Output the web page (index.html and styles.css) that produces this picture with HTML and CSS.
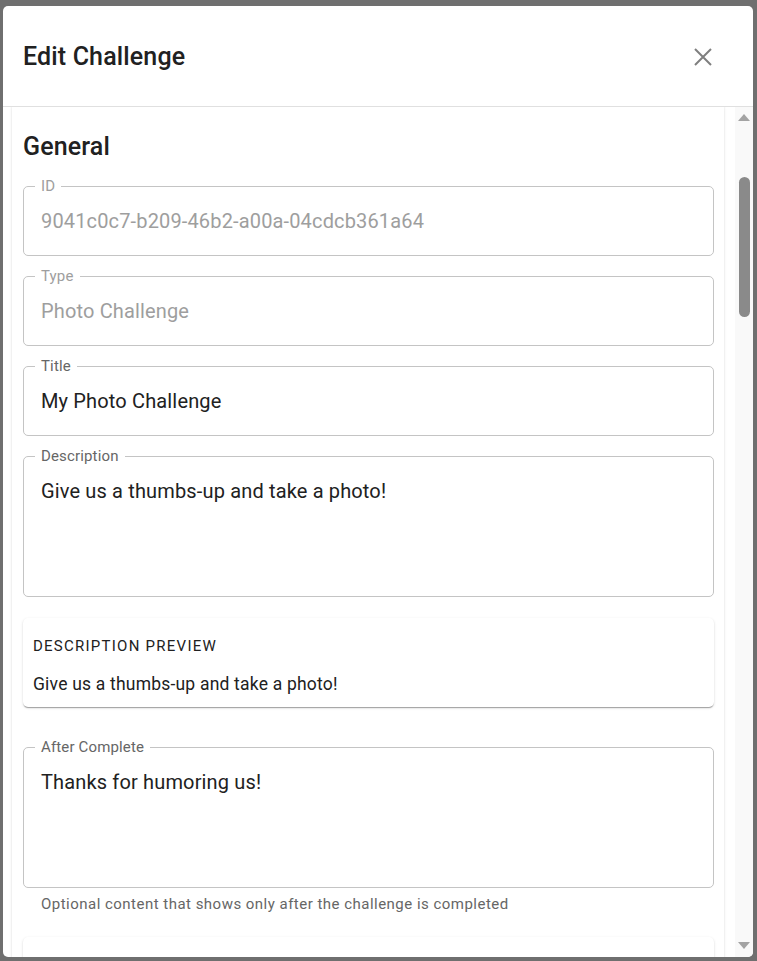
FILE: index.html
```html
<!DOCTYPE html>
<html lang="en">
<head>
<meta charset="utf-8">
<title>Edit Challenge</title>
<link rel="stylesheet" href="styles.css">
</head>
<body>
<div class="backdrop">
  <div class="dialog">
    <div class="dialog-header">
      <h2 class="dialog-title">Edit Challenge</h2>
      <button class="close-btn" aria-label="Close">
        <svg width="18" height="18" viewBox="0 0 18 18"><path d="M1 1 L17 17 M17 1 L1 17" stroke="#7f7f7f" stroke-width="2" fill="none"/></svg>
      </button>
    </div>
    <div class="dialog-body">
      <div class="scroll">
        <div class="paper">
          <h3 class="section-title">General</h3>

          <div class="field disabled">
            <span class="field-label">ID</span>
            <div class="field-input">9041c0c7-b209-46b2-a00a-04cdcb361a64</div>
          </div>

          <div class="field disabled">
            <span class="field-label">Type</span>
            <div class="field-input">Photo Challenge</div>
          </div>

          <div class="field">
            <span class="field-label">Title</span>
            <div class="field-input">My Photo Challenge</div>
          </div>

          <div class="field multiline">
            <span class="field-label">Description</span>
            <div class="field-input">Give us a thumbs-up and take a photo!</div>
          </div>

          <div class="card preview">
            <div class="overline">Description Preview</div>
            <div class="body2">Give us a thumbs-up and take a photo!</div>
          </div>

          <div class="field multiline with-helper">
            <span class="field-label">After Complete</span>
            <div class="field-input">Thanks for humoring us!</div>
          </div>
          <div class="helper">Optional content that shows only after the challenge is completed</div>

          <div class="card next"></div>
        </div>
      </div>
      <div class="scrollbar">
        <div class="arrow up"></div>
        <div class="track"><div class="thumb"></div></div>
        <div class="arrow down"></div>
      </div>
    </div>
  </div>
</div>
</body>
</html>
```

FILE: styles.css
```css
* { box-sizing: border-box; }
html, body {
  margin: 0;
  padding: 0;
  height: 961px;
  overflow: hidden;
  background: #6f6f6f;
  font-family: Roboto, "Liberation Sans", Arial, sans-serif;
}
.backdrop {
  padding: 6px 4px 4px 3px;
}
.dialog {
  width: 750px;
  height: 951px;
  background: #fff;
  border-radius: 5px;
  display: flex;
  flex-direction: column;
  overflow: hidden;
}
.dialog-header {
  height: 101px;
  flex: none;
  display: flex;
  align-items: center;
  justify-content: space-between;
  padding: 1px 41px 0 20px;
  border-bottom: 1px solid #e0e0e0;
}
.dialog-title {
  margin: 0;
  font-size: 25px;
  font-weight: 500;
  line-height: 40px;
  color: #212121;
  letter-spacing: 0.15px;
}
.close-btn {
  border: 0;
  background: none;
  padding: 0;
  width: 18px;
  height: 18px;
  display: flex;
}
.dialog-body {
  flex: 1;
  min-height: 0;
  display: flex;
}
.scroll {
  flex: 1;
  overflow: hidden;
  padding: 0 11px 0 9px;
}
.paper {
  margin-top: -4px;
  background: #fff;
  border-radius: 5px;
  padding: 23px 10px 20px 11px;
  box-shadow: 0 2px 1px -1px rgba(0,0,0,0.2), 0 1px 1px 0 rgba(0,0,0,0.14), 0 1px 3px 0 rgba(0,0,0,0.12);
}
.section-title {
  margin: 1px 0 19px;
  font-size: 25px;
  font-weight: 500;
  line-height: 40px;
  color: #212121;
  letter-spacing: 0.15px;
}
.field {
  position: relative;
  height: 70px;
  border: 1px solid #c4c4c4;
  border-radius: 5px;
  margin-bottom: 20px;
}
.field.multiline {
  height: 141px;
}
.field.with-helper {
  margin-bottom: 0;
}
.field-label {
  position: absolute;
  top: -11px;
  left: 11px;
  padding: 0 6px;
  background: #fff;
  font-size: 15px;
  line-height: 20px;
  color: #666;
  letter-spacing: 0.15px;
}
.field-input {
  height: 100%;
  display: flex;
  align-items: center;
  padding: 0 17px;
  font-size: 20px;
  line-height: 29px;
  color: #212121;
  letter-spacing: 0.15px;
}
.field.multiline .field-input {
  align-items: flex-start;
  padding-top: 20px;
}
.field.disabled .field-label,
.field.disabled .field-input {
  color: #9e9e9e;
}
.card {
  background: #fff;
  border-radius: 5px;
  box-shadow: 0 2px 1px -1px rgba(0,0,0,0.2), 0 1px 1px 0 rgba(0,0,0,0.14), 0 1px 3px 0 rgba(0,0,0,0.12);
}
.preview {
  padding: 8px 10px 10px;
  margin-top: 21px;
  margin-bottom: 40px;
}
.overline {
  font-size: 15px;
  line-height: 40px;
  letter-spacing: 1.25px;
  text-transform: uppercase;
  color: #212121;
}
.body2 {
  margin-top: 6px;
  font-size: 17.5px;
  line-height: 25px;
  color: #212121;
  letter-spacing: 0.2px;
}
.helper {
  margin: 4px 0 0 18px;
  font-size: 15px;
  line-height: 25px;
  color: #666;
  letter-spacing: 0.48px;
}
.next {
  margin-top: 20px;
  height: 120px;
}
.scrollbar {
  width: 18px;
  flex: none;
  background: #f9f9f9;
  display: flex;
  flex-direction: column;
  align-items: center;
}
.arrow {
  width: 0;
  height: 0;
  border-left: 6px solid transparent;
  border-right: 6px solid transparent;
  flex: none;
}
.arrow.up {
  margin-top: 7px;
  border-bottom: 7px solid #a3a3a3;
}
.arrow.down {
  margin-bottom: 8px;
  border-top: 7px solid #a3a3a3;
}
.track {
  flex: 1;
  width: 100%;
  padding-top: 56px;
  display: flex;
  justify-content: center;
}
.thumb {
  width: 11px;
  height: 140px;
  border-radius: 6px;
  background: #8a8a8a;
}
```
